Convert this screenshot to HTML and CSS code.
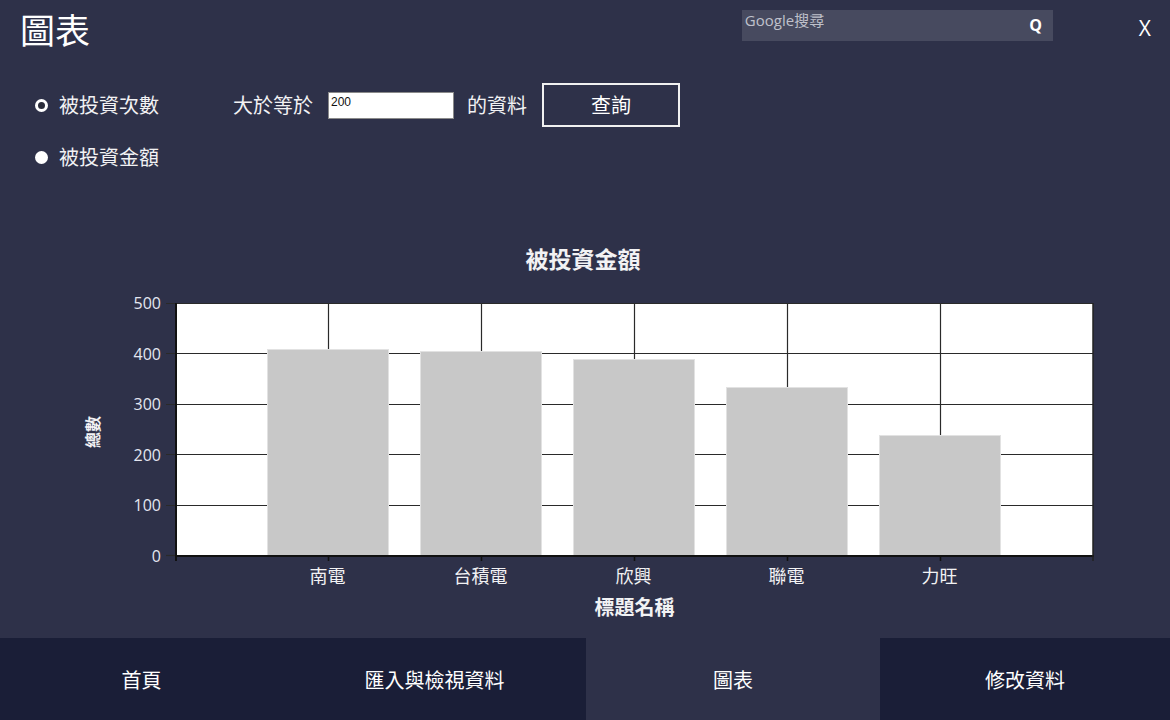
FILE: index.html
```html
<!DOCTYPE html>
<html lang="zh-Hant">
<head>
<meta charset="utf-8">
<title>圖表</title>
<link rel="stylesheet" href="styles.css">
</head>
<body>
<div class="app">
  <header class="top">
    <h1 class="title">圖表</h1>
    <div class="search">
      <span class="search-ph">Google搜尋</span>
      <span class="search-q">Q</span>
    </div>
    <button class="close">X</button>
  </header>

  <section class="controls">
    <div class="row row1">
      <label class="radio"><span class="dot ring"></span>被投資次數</label>
      <span class="lbl gte">大於等於</span>
      <input class="num" type="text" value="200">
      <span class="lbl res">的資料</span>
      <button class="query">查詢</button>
    </div>
    <div class="row row2">
      <label class="radio"><span class="dot solid"></span>被投資金額</label>
    </div>
  </section>

  <section class="chart">
    <div class="chart-title">被投資金額</div>
    <div class="chart-body">
      <div class="ytitle"><span>總數</span></div>
      <div class="ylabels">
        <span>500</span><span>400</span><span>300</span><span>200</span><span>100</span><span>0</span>
      </div>
      <svg class="plot" width="932" height="268" viewBox="0 0 932 268">
        <rect x="10" y="5" width="917" height="253" fill="#ffffff"/>
        <g stroke="#2a2a2a" stroke-width="1.2">
          <line x1="0" y1="5.5" x2="927" y2="5.5"/>
          <line x1="0" y1="55.5" x2="927" y2="55.5"/>
          <line x1="0" y1="106.5" x2="927" y2="106.5"/>
          <line x1="0" y1="156.5" x2="927" y2="156.5"/>
          <line x1="0" y1="207.5" x2="927" y2="207.5"/>
          <line x1="0" y1="257.5" x2="10" y2="257.5"/>
          <line x1="162.5" y1="5" x2="162.5" y2="263"/>
          <line x1="315.5" y1="5" x2="315.5" y2="263"/>
          <line x1="468.5" y1="5" x2="468.5" y2="263"/>
          <line x1="621.5" y1="5" x2="621.5" y2="263"/>
          <line x1="774.5" y1="5" x2="774.5" y2="263"/>
        </g>
        <g fill="#c8c8c8" stroke="#e2e2e2" stroke-width="1">
          <rect x="101.5" y="51.5" width="121" height="206"/>
          <rect x="254.5" y="53.5" width="121" height="204"/>
          <rect x="407.5" y="61.5" width="121" height="196"/>
          <rect x="560.5" y="89.5" width="121" height="168"/>
          <rect x="713.5" y="137.5" width="121" height="120"/>
        </g>
        <g stroke="#111111" stroke-width="2">
          <line x1="10" y1="5" x2="10" y2="263"/>
          <line x1="9" y1="258" x2="928" y2="258"/>
        </g>
        <line x1="927" y1="5" x2="927" y2="263" stroke="#222222" stroke-width="1.5"/>
        <g stroke="#111111" stroke-width="1.5">
          <line x1="162.5" y1="258" x2="162.5" y2="263"/>
          <line x1="315.5" y1="258" x2="315.5" y2="263"/>
          <line x1="468.5" y1="258" x2="468.5" y2="263"/>
          <line x1="621.5" y1="258" x2="621.5" y2="263"/>
          <line x1="774.5" y1="258" x2="774.5" y2="263"/>
        </g>
      </svg>
    </div>
    <div class="xlabels">
      <span>南電</span><span>台積電</span><span>欣興</span><span>聯電</span><span>力旺</span>
    </div>
    <div class="xtitle">標題名稱</div>
  </section>

  <nav class="tabs">
    <div class="tab">首頁</div>
    <div class="tab">匯入與檢視資料</div>
    <div class="tab active">圖表</div>
    <div class="tab">修改資料</div>
  </nav>
</div>
</body>
</html>
```

FILE: styles.css
```css
* { box-sizing: border-box; }

html, body {
  margin: 0;
  padding: 0;
}

body {
  background: #2e3149;
  color: #f2f2f4;
  font-family: "Noto Sans CJK TC", "Noto Sans", sans-serif;
}

.app {
  width: 1170px;
  height: 720px;
  display: flex;
  flex-direction: column;
  overflow: hidden;
}

/* ---------- header ---------- */
.top {
  height: 70px;
  display: flex;
  align-items: flex-start;
  padding: 0 19px 0 20px;
}

.title {
  margin: 0;
  font-size: 35px;
  font-weight: 400;
  line-height: 58px;
  color: #ffffff;
}

.search {
  margin-left: auto;
  margin-top: 10px;
  width: 311px;
  height: 31px;
  background: #474a5f;
  display: flex;
  align-items: flex-start;
  justify-content: space-between;
  padding: 0 11px 0 3px;
}

.search-ph {
  font-family: "Open Sans", "Noto Sans CJK TC", sans-serif;
  font-size: 15px;
  line-height: 21px;
  color: #bfc1cb;
}

.search-q {
  font-family: "Open Sans", sans-serif;
  font-weight: 700;
  font-size: 16px;
  line-height: 31px;
  color: #ffffff;
}

.close {
  margin-left: 86px;
  margin-top: 8px;
  height: 40px;
  padding: 0;
  border: none;
  background: transparent;
  color: #ffffff;
  font-family: "Open Sans", sans-serif;
  font-size: 21px;
  line-height: 40px;
}

/* ---------- controls ---------- */
.controls {
  padding-top: 13px;
}

.row {
  display: flex;
  align-items: center;
  padding-left: 35px;
  font-size: 20px;
}

.row1 { height: 44px; }

.row2 {
  height: 30px;
  margin-top: 15px;
}

.radio {
  display: flex;
  align-items: center;
  line-height: 30px;
  width: 124px;
}

.dot {
  width: 13px;
  height: 13px;
  border-radius: 50%;
  margin-right: 11px;
}

.dot.ring {
  border: 3px solid #ffffff;
  background: #2a2c3a;
}

.dot.solid {
  background: #ffffff;
}

.lbl { line-height: 30px; }

.gte { margin-left: 74px; }

.num {
  margin-left: 15px;
  width: 126px;
  height: 27px;
  border: 1px solid #8a8a8a;
  background: #ffffff;
  padding: 0 2px 6px;
  font-family: "Liberation Sans", sans-serif;
  font-size: 12px;
  color: #111111;
  outline: none;
}

.res { margin-left: 13px; }

.query {
  margin-left: 15px;
  width: 138px;
  height: 44px;
  border: 2px solid #f0f0f0;
  background: transparent;
  color: #ffffff;
  font-family: "Noto Sans CJK TC", sans-serif;
  font-size: 20px;
  line-height: 38px;
  padding: 0;
}

/* ---------- chart ---------- */
.chart {
  flex: 1;
  padding-top: 71px;
}

.chart-title {
  width: 1166px;
  text-align: center;
  font-size: 23px;
  font-weight: 700;
  line-height: 30px;
}

.chart-body {
  margin-top: 25px;
  display: flex;
  padding-left: 76px;
  height: 268px;
}

.ytitle {
  width: 32px;
  display: flex;
  align-items: center;
  justify-content: center;
}

.ytitle span {
  display: block;
  transform: rotate(-90deg);
  font-size: 16px;
  font-weight: 700;
  line-height: 18px;
  white-space: nowrap;
}

.ylabels {
  width: 58px;
  height: 273px;
  margin-top: -5px;
  padding-right: 5px;
  display: flex;
  flex-direction: column;
  justify-content: space-between;
  align-items: flex-end;
  font-family: "Open Sans", sans-serif;
  font-size: 16px;
  line-height: 20px;
  color: #e4e6f0;
}

.plot {
  display: block;
}

.xlabels {
  display: flex;
  padding-left: 251px;
  margin-top: -2px;
}

.xlabels span {
  width: 153px;
  text-align: center;
  font-size: 18px;
  line-height: 22px;
}

.xtitle {
  margin-top: 9px;
  margin-left: 176px;
  width: 917px;
  text-align: center;
  font-size: 20px;
  font-weight: 700;
  line-height: 24px;
}

/* ---------- tabs ---------- */
.tabs {
  height: 82px;
  display: grid;
  grid-template-columns: 283px 303px 294px 290px;
  background: #1a1e37;
}

.tab {
  display: flex;
  align-items: center;
  justify-content: center;
  font-size: 20px;
  font-weight: 400;
  color: #ffffff;
}

.tab.active {
  background: #2e3149;
}
```
